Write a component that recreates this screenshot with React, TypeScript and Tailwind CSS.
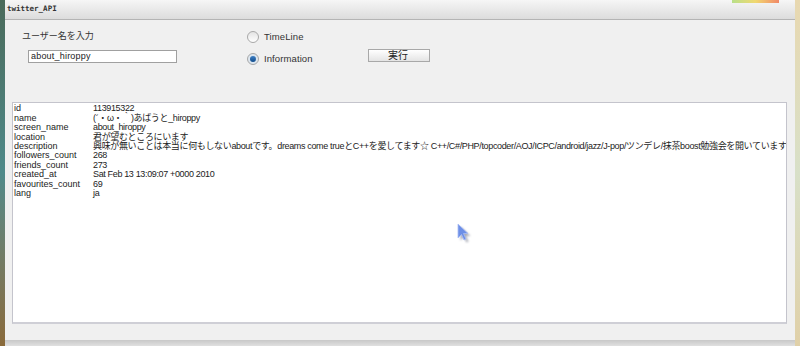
import React from "react";

const rows: [string, string][] = [
  ["id", "113915322"],
  ["name", "(´・ω・｀)あばうと_hiroppy"],
  ["screen_name", "about_hiroppy"],
  ["location", "君が望むところにいます"],
  [
    "description",
    "興味が無いことは本当に何もしないaboutです。dreams come trueとC++を愛してます☆ C++/C#/PHP/topcoder/AOJ/ICPC/android/jazz/J-pop/ツンデレ/抹茶boost勉強会を開いています",
  ],
  ["followers_count", "268"],
  ["friends_count", "273"],
  ["created_at", "Sat Feb 13 13:09:07 +0000 2010"],
  ["favourites_count", "69"],
  ["lang", "ja"],
];

const font = {
  fontFamily: '"Liberation Sans", "Noto Sans CJK JP", sans-serif',
};

const Radio = ({ checked, label }: { checked?: boolean; label: string }) => (
  <div className="flex items-center gap-[5px] h-[14px]">
    <div
      className={`w-[12px] h-[12px] rounded-full border border-[#a8a8a8] flex items-center justify-center ${
        checked ? "bg-[#dde6ef]" : "bg-gradient-to-b from-[#e4e4e4] to-[#ffffff]"
      }`}
    >
      {checked && (
        <div className="w-[6px] h-[6px] rounded-full bg-gradient-to-b from-[#3d7fc4] to-[#0f4c8c]" />
      )}
    </div>
    <span className="text-[9.5px] text-[#333] tracking-[0.1px]">{label}</span>
  </div>
);

const Cursor = () => (
  <svg width="16" height="22" viewBox="0 0 16 22" className="absolute left-[456px] top-[222px]">
    <defs>
      <filter id="sh" x="-50%" y="-50%" width="200%" height="200%">
        <feGaussianBlur stdDeviation="1.2" />
      </filter>
    </defs>
    <path d="M3 3 L3 17 L6.5 13.5 L9 19 L11 18 L8.5 12.5 L13 12.5 Z" fill="#555a70" opacity="0.5" filter="url(#sh)" transform="translate(1.5 1.5)" />
    <path d="M2 2 L2 16 L5.5 12.5 L8 18 L10 17 L7.5 11.5 L12 11.5 Z" fill="#6d8fe6" stroke="#aabdf5" strokeWidth="0.8" />
  </svg>
);

export default function App() {
  return (
    <div className="w-[800px] h-[346px] relative overflow-hidden flex bg-[#e8dcc0]" style={font}>
      <div className="w-[5px] h-full bg-gradient-to-b from-[#4a6a5a] via-[#4f8a8a] to-[#8a6a3a]" />
      <div className="w-[790px] h-full flex flex-col">
        <div className="h-[20px] shrink-0 bg-gradient-to-b from-[#f6f6f6] to-[#dcdcdc] border-b border-[#b4b4b4] flex items-center relative">
          <span
            className="text-[7.5px] font-bold text-[#333] pl-[2px] pb-[2px]"
            style={{ fontFamily: '"DejaVu Sans Mono", monospace' }}
          >
            twitter_API
          </span>
          <div className="absolute left-[727px] top-0 w-[47px] h-[3px] bg-gradient-to-r from-[#b8e08a] via-[#f0d870] to-[#f08868]" />
        </div>
        <div className="flex-1 bg-[#f0f0f0] flex flex-col">
          <div className="h-[82px] shrink-0 flex">
            <div className="w-[242px] flex flex-col pl-[17px] pt-[10px]">
              <span className="text-[9px] text-[#333] h-[15px]">ユーザー名を入力</span>
              <input
                readOnly
                value="about_hiroppy"
                className="mt-[5px] ml-[6px] w-[149px] h-[13px] bg-white border border-[#a0a0a0] text-[9px] text-[#222] px-[2px] outline-none tracking-[0.2px]"
                style={font}
              />
            </div>
            <div className="w-[121px] flex flex-col pt-[10px] gap-[8px]">
              <Radio label="TimeLine" />
              <Radio checked label="Information" />
            </div>
            <div className="pt-[29px]">
              <button className="w-[62px] h-[13px] bg-gradient-to-b from-[#ffffff] to-[#e4e4e4] border border-[#a8a8a8] text-[10px] leading-none text-[#222] flex items-center justify-center pr-[2px]">
                実行
              </button>
            </div>
          </div>
          <div className="ml-[7px] w-[775px] h-[222px] bg-white border border-[#c4c4cc] border-b-2 border-b-[#cfcfd6] pt-[1px] pl-[1px] overflow-hidden">
            {rows.map(([k, v]) => (
              <div key={k} className="flex h-[9.45px] items-center text-[9px] leading-none text-[#222] whitespace-nowrap">
                <span className="w-[79px] shrink-0">{k}</span>
                <span className="tracking-[-0.35px]">{v}</span>
              </div>
            ))}
          </div>
          <div className="flex-1" />
          <div className="h-[6px] bg-gradient-to-b from-[#c8c8c8] to-[#e0e0e0]" />
        </div>
      </div>
      <div className="flex-1 bg-gradient-to-b from-[#e8d8b0] via-[#d8e0c8] to-[#e0d0a8]" />
      <Cursor />
    </div>
  );
}
